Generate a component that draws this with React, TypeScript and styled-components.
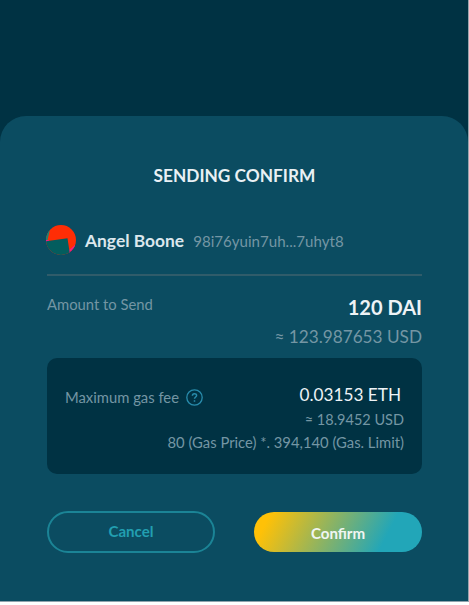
import React from "react";
import styled, { createGlobalStyle } from "styled-components";

const GlobalStyle = createGlobalStyle`
  * { box-sizing: border-box; }
  body { margin: 0; background: #fff; font-family: Lato, "Open Sans", sans-serif; }
`;

const Screen = styled.main`
  width: 469px;
  height: 602px;
  padding-top: 116px;
  background: #003243;
  border-right: 1px solid #9aa5ad;
  border-bottom: 1px solid #8fa3ad;
`;

const Sheet = styled.section`
  height: 485px;
  padding: 49px 46px 0 47px;
  border-radius: 26px 26px 0 0;
  background: #0b4c61;
`;

const Title = styled.h1`
  margin: 0;
  font-size: 17.3px;
  line-height: 22px;
  font-weight: 700;
  text-align: center;
  color: #e9f0f4;
`;

const Recipient = styled.div`
  display: flex;
  align-items: center;
  height: 89px;
  padding-top: 21px;
  border-bottom: 2px solid #305c6a;
`;

const Avatar = styled.svg`
  width: 30px;
  height: 30px;
  margin: -2px 0 0 -1px;
`;

const Name = styled.strong`
  margin-left: 9px;
  font-size: 17.4px;
  line-height: 22px;
  font-weight: 700;
  color: #dbe7ed;
`;

const Address = styled.span`
  margin-left: 9px;
  font-size: 15.1px;
  line-height: 22px;
  color: #7496a4;
`;

const Split = styled.div`
  display: flex;
  justify-content: space-between;
`;

const Amount = styled(Split)`
  height: 82px;
  padding-top: 18px;
`;

const Label = styled.span`
  display: flex;
  align-items: center;
  gap: 7px;
  height: 20px;
  font-size: 14.8px;
  color: #7496a4;
`;

const Figures = styled.div`
  display: flex;
  flex-direction: column;
  align-items: flex-end;
`;

const Figure = styled.span<{ $size: number; $line: number; $weight?: number; $bright?: boolean; $inset?: number }>`
  font-size: ${(p) => p.$size}px;
  line-height: ${(p) => p.$line}px;
  font-weight: ${(p) => p.$weight ?? 400};
  color: ${(p) => (p.$bright ? "#eef3f6" : "#7496a4")};
  margin-right: ${(p) => p.$inset ?? 0}px;
  white-space: nowrap;
`;

const GasCard = styled.div`
  height: 116px;
  padding: 25px 18px 0;
  border-radius: 10px;
  background: #003243;
`;

const Help = styled.svg`
  width: 17px;
  height: 17px;
`;

const GasTop = styled(Split)`
  align-items: flex-start;
  height: 24px;

  & > ${Label} {
    margin-top: 4px;
  }
`;

const Actions = styled.div`
  display: flex;
  justify-content: space-between;
  margin-top: 37px;
`;

const Button = styled.button<{ $primary?: boolean }>`
  width: 168px;
  height: ${(p) => (p.$primary ? 40 : 42)}px;
  margin-top: ${(p) => (p.$primary ? 1 : 0)}px;
  padding: ${(p) => (p.$primary ? "1px 0 0" : "0 0 2px")};
  border: ${(p) => (p.$primary ? "0" : "2px solid #1b8496")};
  border-radius: 21px;
  background: ${(p) => (p.$primary ? "linear-gradient(117deg, #ffc107 9%, #22a6b8 77%)" : "transparent")};
  color: ${(p) => (p.$primary ? "#f0f6f2" : "#229fb1")};
  font-family: inherit;
  font-size: 15.1px;
  line-height: 20px;
  font-weight: 700;
`;

export default function App() {
  return (
    <>
      <GlobalStyle />
      <Screen>
        <Sheet>
          <Title>SENDING CONFIRM</Title>
          <Recipient>
            <Avatar viewBox="0 0 30 30">
              <defs>
                <clipPath id="face"><circle cx="15" cy="15" r="15" /></clipPath>
              </defs>
              <g clipPath="url(#face)">
                <path fill="#ff2d05" d="M0 0h30v30H0z" />
                <path fill="#178776" d="M0 0h5L1 17H0z" />
                <path fill="#f51b83" d="M23 25l6-5v10h-6zM0 15l3 0v2H0z" />
                <path fill="#035d5e" d="M0 16.3 21.5 13.3 24 30H0z" />
              </g>
            </Avatar>
            <Name>Angel Boone</Name>
            <Address>98i76yuin7uh...7uhyt8</Address>
          </Recipient>
          <Amount>
            <Label>Amount to Send</Label>
            <Figures>
              <Figure $size={20} $line={27} $weight={700} $bright>120 DAI</Figure>
              <Figure $size={17.2} $line={31}>≈ 123.987653 USD</Figure>
            </Figures>
          </Amount>
          <GasCard>
            <GasTop>
              <Label>
                Maximum gas fee
                <Help viewBox="0 0 17 17" fill="none" stroke="#288cac" strokeWidth="1.3">
                  <circle cx="8.5" cy="8.5" r="7.7" />
                  <path strokeWidth="1.5" d="M6.4 6.8c0-2.8 4.2-2.7 4.2-.3 0 1.5-2.1 1.5-2.1 3.3M8.5 11.2v1.5" />
                </Help>
              </Label>
              <Figure $size={17.2} $line={24} $bright $inset={3}>0.03153 ETH</Figure>
            </GasTop>
            <Figures>
              <Figure $size={14.5} $line={25}>≈ 18.9452 USD</Figure>
              <Figure $size={14.8} $line={20}>80 (Gas Price) *. 394,140 (Gas. Limit)</Figure>
            </Figures>
          </GasCard>
          <Actions>
            <Button>Cancel</Button>
            <Button $primary>Confirm</Button>
          </Actions>
        </Sheet>
      </Screen>
    </>
  );
}
